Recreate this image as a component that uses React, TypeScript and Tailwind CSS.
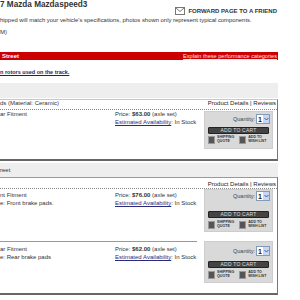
import React from "react";

interface Product {
  name: string;
  lines: string[];
  price: string;
}

// envelope drawn next to the forward link
const Envelope = () => (
  <svg width="10" height="8" viewBox="0 0 10 8" className="mr-[3px]">
    <rect x="0.5" y="0.5" width="9" height="7" fill="#fff" stroke="#777" />
    <path d="M0.5 0.5 L5 4.5 L9.5 0.5" fill="none" stroke="#777" />
  </svg>
);

const Check = () => (
  <span className="block w-[7px] h-[8px] bg-[#555] border border-[#999] shrink-0" />
);

function CartBox({ box, qty, add, checks }: { box: string; qty: string; add: string; checks: string }) {
  return (
    <div className={`w-[69px] bg-[#d9d9d9] border border-[#cdcdcd] flex flex-col items-center ${box}`}>
      <div className={`flex items-center justify-end w-full pr-[2px] ${qty}`}>
        <span className="text-[5.5px] text-[#444] mr-[1px]">Quantity:</span>
        <span className="flex items-center justify-between w-[14px] h-[10px] bg-white border border-[#7f9db9] pl-[1px]">
          <span className="text-[7px] font-bold leading-none text-[#222]">1</span>
          <span className="w-[6px] h-[8px] bg-[#c8d6f4] flex items-center justify-center">
            <svg width="5" height="4" viewBox="0 0 5 4">
              <path d="M0.5 1 L2.5 3 L4.5 1" fill="none" stroke="#3b5aa0" strokeWidth="1" />
            </svg>
          </span>
        </span>
      </div>
      <div
        className={`w-[61px] h-[7px] rounded-[1px] bg-[#444] border border-[#222] text-[#ddd] text-[5px] leading-[5px] text-center tracking-[0.2px] ${add}`}
      >
        ADD TO CART
      </div>
      <div className={`flex items-center w-[61px] ${checks}`}>
        <Check />
        <span className="ml-[2px] text-[3.6px] leading-[3.8px] font-bold text-[#333]">
          SHIPPING
          <br />
          QUOTE
        </span>
        <span className="ml-[5px]">
          <Check />
        </span>
        <span className="ml-[2px] text-[3.6px] leading-[3.8px] font-bold text-[#333]">
          ADD TO
          <br />
          WISH LIST
        </span>
      </div>
    </div>
  );
}

function ProductText({ product, pad }: { product: Product; pad: string }) {
  return (
    <>
      <div className={`w-[115px] text-[6px] leading-[8px] ${pad}`}>
        {product.lines.map((l) => (
          <div key={l}>{l}</div>
        ))}
      </div>
      <div className={`flex-1 text-[6px] leading-[8px] ${pad}`}>
        <div>
          Price: <b>{product.price}</b> (axle set)
        </div>
        <div>
          <span className="underline text-[#2b2b7d]">Estimated Availability</span>: In Stock
        </div>
      </div>
    </>
  );
}

const products: Product[] = [
  { name: "ds (Material: Ceramic)", lines: ["ar Fitment"], price: "$63.00" },
  { name: "", lines: ["nt Fitment", "e: Front brake pads."], price: "$76.00" },
  { name: "", lines: ["ar Fitment", "e: Rear brake pads"], price: "$62.00" },
];

export default function App() {
  return (
    <div className="w-[300px] h-[300px] overflow-hidden bg-white text-[#333] font-['Liberation_Sans',Arial,sans-serif]">
      <div className="w-[278px]">
        {/* title + forward link */}
        <div className="flex justify-between items-start h-[16px]">
          <div className="text-[8.2px] leading-[10px] font-bold text-[#333]">7 Mazda Mazdaspeed3</div>
          <div className="flex items-center mt-[6px] h-[10px] mr-[1px]">
            <Envelope />
            <span className="text-[6px] font-bold text-[#333] leading-[10px]">FORWARD PAGE TO A FRIEND</span>
          </div>
        </div>

        <div className="h-[9px] leading-[9px] text-[5.9px]">
          hipped will match your vehicle&apos;s specifications, photos shown only represent typical components.
        </div>
        <div className="mt-[3px] h-[9px] leading-[9px] text-[6px]">M)</div>

        {/* red category bar */}
        <div className="mt-[15px] h-[8px] bg-[#cc0000] flex items-center justify-between pl-[2px] pr-[1px]">
          <span className="text-[6px] font-bold text-white leading-[8px]">Street</span>
          <span className="text-[5.6px] text-[#ffe0e0] underline leading-[8px]">
            Explain these performance categories
          </span>
        </div>

        <div className="mt-[8px] h-[8px] leading-[8px] text-[5.5px] font-bold underline text-[#1e1e66]">
          n rotors used on the track.
        </div>

        <div className="mt-[7px] h-[15px] bg-[#eeeeee]" />

        {/* box 1 */}
        <div className="mt-[1px] border-t border-[#c8c8c8] border-r border-r-[#777] border-b-2 border-b-[#666]">
          <div className="h-[10px] flex justify-between items-start border-b border-dotted border-[#888] text-[6px] leading-[7px]">
            <span>{products[0].name}</span>
            <span className="text-[#222] mr-[1px]">Product Details | Reviews</span>
          </div>
          <div className="flex h-[49px]">
            <ProductText product={products[0]} pad="pt-0" />
            <CartBox box="mt-[1px] mr-[4px] h-[38px]" qty="mt-[2px]" add="mt-[3px]" checks="mt-[2px]" />
          </div>
        </div>

        <div className="mt-[2px] h-[14px] bg-[#eeeeee] text-[6px] leading-[14px]">reet</div>

        {/* box 2 */}
        <div className="border-t border-[#999] border-r border-r-[#777] border-b-2 border-b-[#666]">
          <div className="h-[11px] flex justify-end items-start pt-[1px] border-b border-dotted border-[#888] text-[6px] leading-[10px]">
            <span className="text-[#222] mr-[1px]">Product Details | Reviews</span>
          </div>
          <div className="flex h-[52px]">
            <ProductText product={products[1]} pad="pt-[2px]" />
            <CartBox box="mr-[4px] h-[43px]" qty="mt-[1px]" add="mt-[10px]" checks="mt-[3px]" />
          </div>
          <div className="flex h-[52px]">
            <div className="w-[197px] flex border-t border-[#999]">
              <ProductText product={products[2]} pad="pt-[3px]" />
            </div>
            <div className="ml-[7px]">
              <CartBox box="mr-[4px] h-[42px]" qty="mt-[4px]" add="mt-[5px]" checks="mt-[3px]" />
            </div>
          </div>
        </div>
      </div>
    </div>
  );
}
